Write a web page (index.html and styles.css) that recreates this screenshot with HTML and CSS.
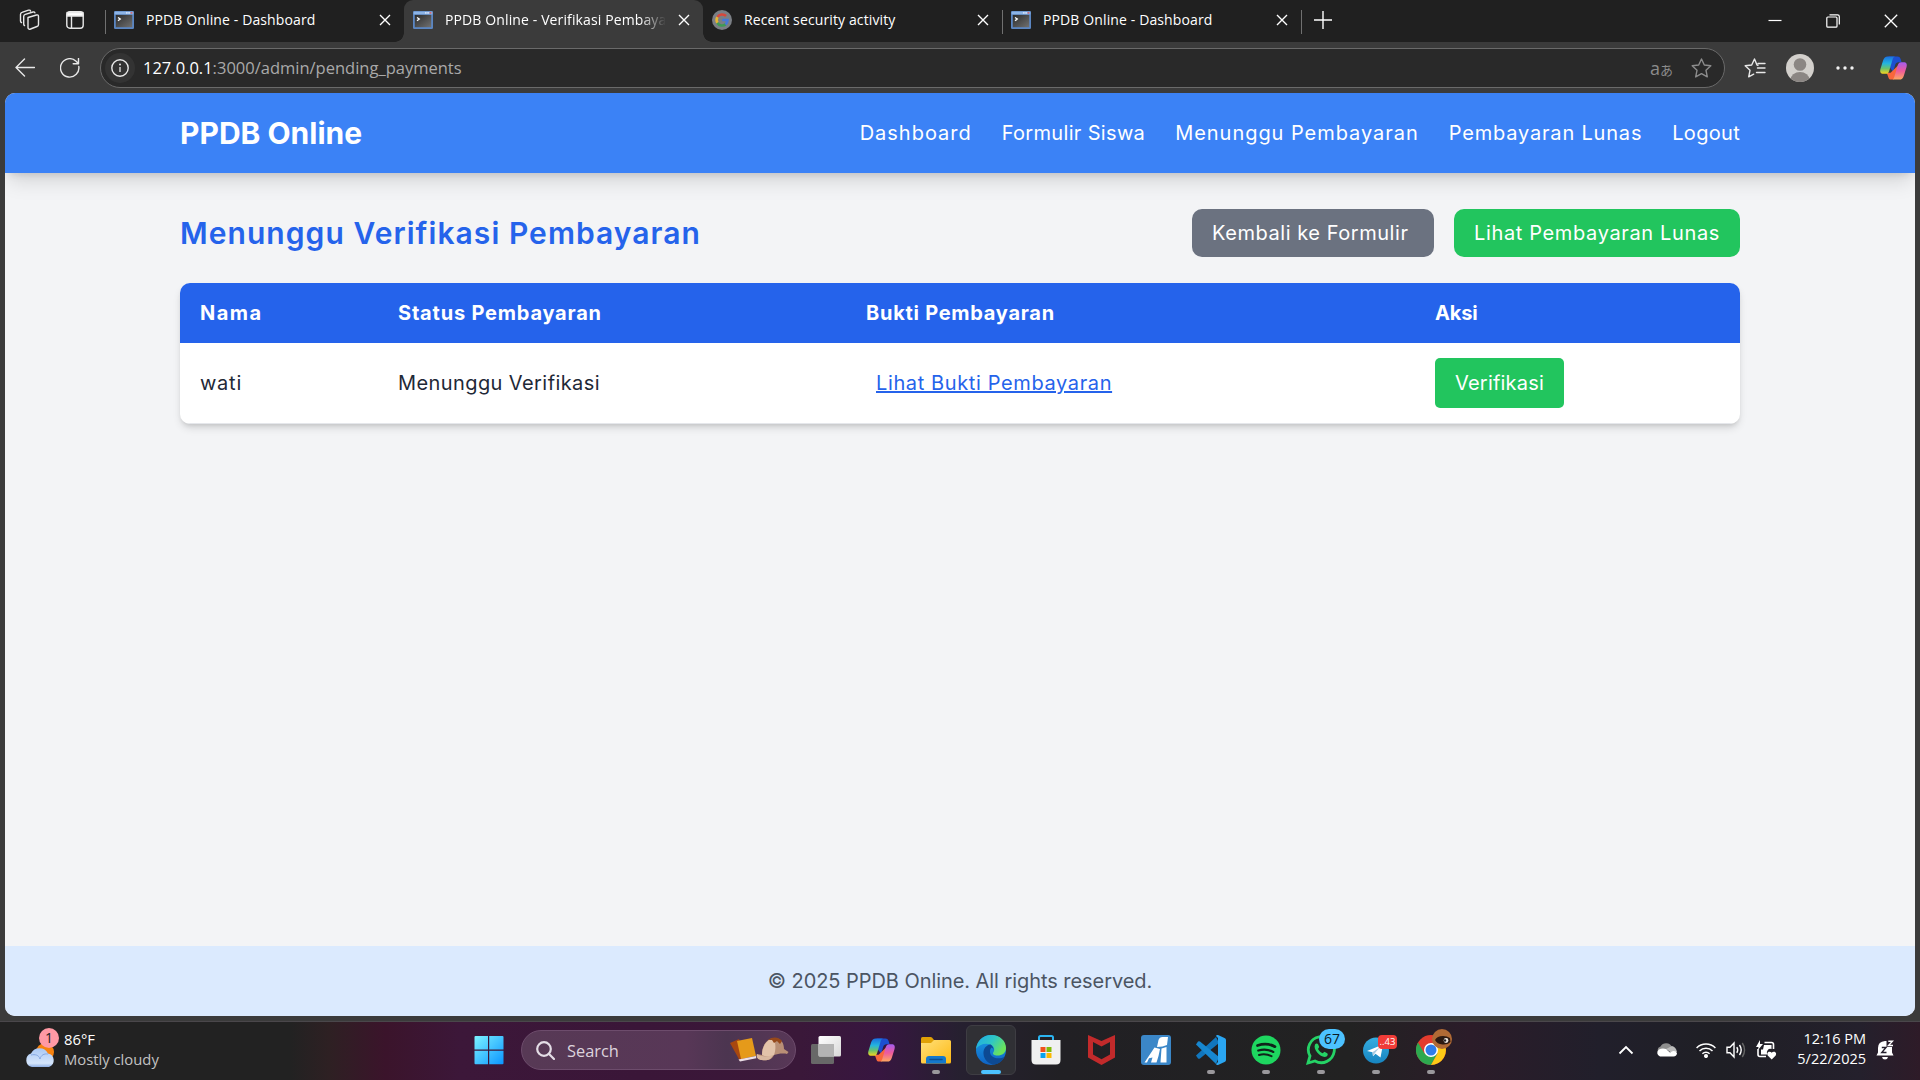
FILE: index.html
```html
<!DOCTYPE html>
<html lang="id">
<head>
<meta charset="utf-8">
<title>PPDB Online - Verifikasi Pembayaran</title>
<link rel="stylesheet" href="styles.css">
</head>
<body>
<svg class="defs" aria-hidden="true">
  <defs>
    <linearGradient id="copA" x1="0" y1="0" x2="0" y2="1"><stop offset="0" stop-color="#1b6fe0"/><stop offset=".4" stop-color="#23b4e0"/><stop offset=".7" stop-color="#6cc36a"/><stop offset="1" stop-color="#f7d51d"/></linearGradient>
    <linearGradient id="copB" x1="0" y1="0" x2="0" y2="1"><stop offset="0" stop-color="#a35cf0"/><stop offset=".5" stop-color="#ee5a9c"/><stop offset="1" stop-color="#ffa860"/></linearGradient>
    <linearGradient id="win" x1="0" y1="0" x2="1" y2="1"><stop offset="0" stop-color="#7cf2ff"/><stop offset="1" stop-color="#0b95ff"/></linearGradient>
    <linearGradient id="term" x1="0" y1="0" x2="1" y2="1"><stop offset="0" stop-color="#2b2b2b"/><stop offset="1" stop-color="#707070"/></linearGradient>
    <linearGradient id="folder" x1="0" y1="0" x2="1" y2="1"><stop offset="0" stop-color="#ffe07a"/><stop offset="1" stop-color="#fdb913"/></linearGradient>
    <linearGradient id="edgeA" x1="0" y1="0" x2="1" y2=".5"><stop offset="0" stop-color="#1fa9e8"/><stop offset=".55" stop-color="#2fc6c5"/><stop offset="1" stop-color="#6be35a"/></linearGradient>
    <linearGradient id="edgeB" x1="0" y1="0" x2="0" y2="1"><stop offset="0" stop-color="#1a9fe6"/><stop offset="1" stop-color="#0f62c4"/></linearGradient>
    <linearGradient id="cloud" x1="0" y1="0" x2="0" y2="1"><stop offset="0" stop-color="#a9c8f5"/><stop offset=".8" stop-color="#d5e5fb"/><stop offset="1" stop-color="#8fb0e6"/></linearGradient>
    <linearGradient id="tele" x1="0" y1="0" x2="0" y2="1"><stop offset="0" stop-color="#35ade1"/><stop offset="1" stop-color="#1784c0"/></linearGradient>
    <linearGradient id="view" x1="0" y1="0" x2="1" y2="1"><stop offset="0" stop-color="#ffffff"/><stop offset="1" stop-color="#d8d8d8"/></linearGradient>
    <symbol id="i-term" viewBox="0 0 20 18"><rect width="20" height="18" rx="1.2" fill="#5b86c2"/><rect x=".6" y=".6" width="18.8" height="2.8" fill="#8db4e6"/><rect x="12" y="1.2" width="1.6" height="1.4" fill="#dfeafa"/><rect x="14.3" y="1.2" width="1.6" height="1.4" fill="#dfeafa"/><rect x="16.6" y="1.2" width="1.8" height="1.4" fill="#e0595b"/><rect x="1.8" y="3.9" width="16.4" height="12.3" fill="url(#term)"/><path d="M4 6.400l2.300 1.700L4 9.800" stroke="#fff" stroke-width="1.3" fill="none"/></symbol>
    <symbol id="i-close" viewBox="0 0 12 12"><path d="M1 1l10 10M11 1L1 11" stroke="#fff" stroke-width="1.4" fill="none"/></symbol>
    <symbol id="i-copilot" viewBox="0 0 30 30"><path d="M10 3h9c2 0 3 1 3.500 3l.8 3h-3c-2 0-3 .8-3.600 3l-2 7-7-9z" fill="#1d4fd0"/><path d="M8 20h4l9-9-4 13c-.7 2-1.500 3-3.500 3h-1c-1.700 0-2.600-1-3-3z" fill="#f8673c"/><path d="M17 3c-1.600 0-2.300 1-2.800 2.700L10.500 18c-.6 2-1.600 3-3.500 3H4.500C1.600 21 .7 19 1.500 16L4.300 7C5.200 4.300 6.500 3 9 3z" fill="url(#copA)"/><path d="M13 27c1.600 0 2.300-1 2.800-2.700L19.500 12c.6-2 1.600-3 3.500-3h2.500c2.900 0 3.800 2 3 5l-2.800 9c-.9 2.700-2.200 4-4.700 4z" fill="url(#copB)"/></symbol>
  </defs>
</svg>

<div class="tabstrip">
  <div class="strip-tools">
    <svg width="22" height="22" viewBox="0 0 22 22" class="line"><path d="M9 8.500l8.500-2.500c1.200-.3 2 .2 2 1.400v8c0 1-.5 1.800-1.500 2.100l-6.500 2.500c-1.500.5-2.500 0-2.500-1.500zM5.500 16.500c-.6-.2-.8-.7-.8-1.500V7.500c0-1 .6-1.800 1.600-2.100L14 3c1-.3 1.600 0 1.900.8M2.500 13.500c-.8-.2-1-.8-1-1.500V5.500c0-1 .5-1.800 1.500-2.100L9.500 1.200c1-.3 1.800 0 2 .8"/></svg>
    <svg width="18" height="18" viewBox="0 0 18 18" class="line"><rect x=".8" y=".8" width="16.400" height="16.400" rx="3"/><path d="M1 1.500h16v3.500H1z" fill="#fff"/><path d="M5.500 5v12"/></svg>
  </div>
  <div class="tab">
    <svg class="fav" width="20" height="18"><use href="#i-term"/></svg><span class="tab-title">PPDB Online - Dashboard</span><svg class="x" width="12" height="12"><use href="#i-close"/></svg>
  </div>
  <div class="tab tab-active">
    <svg class="fav" width="20" height="18"><use href="#i-term"/></svg><span class="tab-title tab-fade">PPDB Online - Verifikasi Pembayaran</span><svg class="x" width="12" height="12"><use href="#i-close"/></svg>
  </div>
  <div class="tab tab-sep">
    <svg class="fav" width="20" height="20" viewBox="0 0 20 20"><circle cx="10" cy="10" r="10" fill="#7b7f85"/><g fill="none" stroke-width="2.600"><path d="M5.500 7A5.600 5.600 0 0 1 14 6" stroke="#d8473b"/><path d="M5.500 13A5.600 5.600 0 0 1 5.400 7.200" stroke="#e7b732"/><path d="M13.600 14.300A5.600 5.600 0 0 1 5.300 12.800" stroke="#3f9b55"/><path d="M10.200 10h5.300a5.600 5.600 0 0 1-2 4.400" stroke="#4678d8"/></g></svg><span class="tab-title">Recent security activity</span><svg class="x" width="12" height="12"><use href="#i-close"/></svg>
  </div>
  <div class="tab tab-sep">
    <svg class="fav" width="20" height="18"><use href="#i-term"/></svg><span class="tab-title">PPDB Online - Dashboard</span><svg class="x" width="12" height="12"><use href="#i-close"/></svg>
  </div>
  <svg class="newtab" width="18" height="18" viewBox="0 0 18 18"><path d="M9 0v18M0 9h18" stroke="#fff" stroke-width="1.400"/></svg>
  <div class="winctl">
    <svg width="14" height="14" viewBox="0 0 14 14"><path d="M.5 6.500h13" stroke="#fff" stroke-width="1.200"/></svg>
    <svg width="14" height="14" viewBox="0 0 14 14" fill="none" stroke="#fff" stroke-width="1.200"><rect x=".8" y="3" width="10.200" height="10.200" rx="1"/><path d="M3.500.8h8c1.200 0 1.800.6 1.800 1.800v8"/></svg>
    <svg width="14" height="14" viewBox="0 0 14 14"><path d="M.8.8l12.400 12.400M13.200.8L.8 13.200" stroke="#fff" stroke-width="1.300"/></svg>
  </div>
</div>

<div class="toolbar">
  <svg class="back" width="20" height="20" viewBox="0 0 20 20"><path d="M19.500 9.500H1.500M9.500 1L1 9.500 9.500 18" class="line"/></svg>
  <svg class="reload" width="20" height="20" viewBox="0 0 20 20"><path d="M18.800 8.500a9.200 9.200 0 1 1-3-5.500l2.600 2.500M18.500.5v5.300h-5.300" class="line"/></svg>
  <div class="address">
    <span class="info"><svg width="18" height="18" viewBox="0 0 18 18"><circle cx="9" cy="9" r="8.200" class="line"/><path d="M9 8v5" stroke="#e8e8e8" stroke-width="1.300"/><circle cx="9" cy="5.500" r="1" fill="#e8e8e8"/></svg></span>
    <span class="url"><b>127.0.0.1</b>:3000/admin/pending_payments</span>
    <span class="translate"><i>a</i>あ</span>
    <svg class="star" width="21" height="20" viewBox="0 0 21 20"><path d="M10.500 1l2.800 6 6.500.8-4.800 4.500 1.300 6.600-5.800-3.200-5.800 3.200L6 12.300 1.200 7.800 7.700 7z"/></svg>
  </div>
  <svg class="favs" width="22" height="20" viewBox="0 0 22 20"><path d="M14 7.200l-1-.2-2.500-6L7.700 7 1.200 7.800 6 12.300l-1.300 6.600 5-2.700M14 5.500h7M13.500 10h7.500M12.500 14.500H21" class="line"/></svg>
  <svg class="avatar" width="28" height="28" viewBox="0 0 28 28"><clipPath id="av"><circle cx="14" cy="14" r="14"/></clipPath><g clip-path="url(#av)"><rect width="28" height="28" fill="#d3d0cc"/><circle cx="14" cy="10.500" r="6.300" fill="#8b8683"/><ellipse cx="14" cy="26" rx="9.500" ry="8" fill="#8b8683"/></g></svg>
  <svg class="dots" width="18" height="4" viewBox="0 0 18 4" fill="#f2f2f2"><circle cx="2" cy="2" r="1.700"/><circle cx="9" cy="2" r="1.700"/><circle cx="16" cy="2" r="1.700"/></svg>
  <svg class="cop" width="29" height="30"><use href="#i-copilot"/></svg>
</div>

<div class="viewport">
  <div class="page">
    <header class="site-header">
      <div class="container header-row">
        <div class="brand">PPDB Online</div>
        <nav class="nav"><a class="nav-dashboard">Dashboard</a><a class="nav-form">Formulir Siswa</a><a class="nav-pending">Menunggu Pembayaran</a><a class="nav-paid">Pembayaran Lunas</a><a class="nav-logout">Logout</a></nav>
      </div>
    </header>
    <main class="container main">
      <div class="title-row">
        <h1>Menunggu Verifikasi Pembayaran</h1>
        <div class="actions"><a class="btn btn-gray">Kembali ke Formulir</a><a class="btn btn-green">Lihat Pembayaran Lunas</a></div>
      </div>
      <div class="table">
        <div class="row head"><span class="h-name">Nama</span><span class="h-status">Status Pembayaran</span><span class="h-proof">Bukti Pembayaran</span><span class="h-action">Aksi</span></div>
        <div class="row body"><span class="c-name">wati</span><span class="c-status">Menunggu Verifikasi</span><span><a class="proof">Lihat Bukti Pembayaran</a></span><span><button class="verify">Verifikasi</button></span></div>
      </div>
    </main>
    <footer class="site-footer">© 2025 PPDB Online. All rights reserved.</footer>
  </div>
</div>

<div class="taskbar">
  <div class="weather">
    <div class="wicon">
      <svg width="31" height="26" viewBox="0 0 31 26"><circle cx="20" cy="11" r="9" fill="#f7820f"/><path d="M7 26a7 7 0 0 1-1-13.500A9.500 9.500 0 0 1 23 12.500 7 7 0 0 1 24 26z" fill="url(#cloud)"/><path d="M6 14c4-1 8 0 9 4 1-4 4-5.500 8-5" fill="none" stroke="#86a8e2"/></svg>
      <span class="wbadge">1</span>
    </div>
    <div class="wtext"><span>86°F</span><span class="dim">Mostly cloudy</span></div>
  </div>
  <div class="dock">
    <span class="cell"><svg width="30" height="30" viewBox="0 0 30 30" fill="url(#win)"><path d="M.5 2q0-1 1-1H14v13.500H.5zM15.200 1h13.300q1 0 1 1v12.500H15.200zM.5 15.700H14v13.500H1.500q-1 0-1-1zM15.200 15.700h14.300v12.500q0 1-1 1H15.200z"/></svg></span>
    <div class="search">
      <svg width="19" height="19" viewBox="0 0 19 19" fill="none" stroke="#e4dde6" stroke-width="2.200"><circle cx="8" cy="8" r="6.800"/><path d="M12.800 12.800L18 18" stroke-linecap="round"/></svg>
      <span>Search</span>
      <svg class="promo" width="60" height="26" viewBox="0 0 60 26"><path d="M1 6l9-4 9 18-8 4z" fill="#a8470f"/><path d="M8 4l15-3 4 18-15 3z" fill="#e59a1a"/><path d="M9.500 22.500L27 19l.3 2.300L11 24.500z" fill="#ece0e8"/><path d="M33 18c0-9 4-16 12-17 8 0 10 6 10 11l4.500 3-1.500 2c-4-1-10 0-13 1-2 5-8 6-12 5-4 0-6-3-5-6 2 0 4 1 5 1z" fill="#b98f76"/><path d="M33 18c0-8 4-15 11-17 3 4 3 12 1 17-4 2-8 2-12 0z" fill="#e3c3aa"/><path d="M28 17c4 3 11 3 16 1-2 5-7 6-11 5-4 0-6-3-5-6z" fill="#d9b8a0"/><path d="M39 3c5-4 11-3 14 1l-2 3-3-3-3 2-2-3z" fill="#96481b"/></svg>
    </div>
    <span class="cell"><svg width="30" height="28" viewBox="0 0 30 28"><rect y="8" width="23" height="20" rx="1.500" fill="#686868"/><rect x="7.500" y="0" width="22.500" height="20.500" rx="1.500" fill="url(#view)"/><path d="M7.500 8H23v12.500H9q-1.500 0-1.500-1.500z" fill="#b4b4b4"/></svg></span>
    <span class="cell"><svg width="29" height="30"><use href="#i-copilot"/></svg></span>
    <span class="cell run"><svg width="30" height="28" viewBox="0 0 30 28"><path d="M0 2.500Q0 1 1.500 1h8q1 0 1.700.8L13 4v5H0z" fill="#e0a106"/><path d="M0 7h10l3-3h15.500Q30 4 30 5.500V26q0 1.500-1.500 1.500h-27Q0 27.500 0 26z" fill="url(#folder)"/><path d="M5 27.500V23q0-3 3-3h14q3 0 3 3v4.500z" fill="#1478cc"/><path d="M9 23.500h12" stroke="#0b4f94" stroke-width="1.500" stroke-linecap="round"/></svg></span>
    <span class="cell run active"><svg width="30" height="30" viewBox="0 0 30 30"><circle cx="15" cy="15" r="15" fill="url(#edgeB)"/><path d="M0 14C1 5.500 7.500 0 15.500 0 24 0 30 6 30 13c0 5-4 7.500-8.500 7.500-3.500 0-5.500-1.500-4-3.500 1.500-2 .8-6-3-7.500C9 7.500 3 9.500 0 14z" fill="url(#edgeA)"/><path d="M14.500 9.500C10 10 7 14 7.500 19c.6 6 5 10 10.500 10.700C23 29 26.500 26 28.500 22c-6 3-15 1-14.500-6 .1-1.500.7-2.700 1.500-3.500 1.800.8 2.500 3 1.500 5 1.500-3-.3-7-2.500-8z" fill="#0d4a94"/></svg></span>
    <span class="cell"><svg width="30" height="30" viewBox="0 0 30 30"><path d="M8 7V2.500Q8 1 9.500 1h11Q22 1 22 2.500V7" fill="none" stroke="#2bb4f0" stroke-width="2"/><path d="M.5 5h29v20q0 4.500-4.500 4.500H5Q.5 29.500.5 25z" fill="#f0f0f0"/><path d="M9.500 12h5v5h-5z" fill="#f1511b"/><path d="M15.500 12h5v5h-5z" fill="#80bb0a"/><path d="M9.500 18h5v5h-5z" fill="#07a3ee"/><path d="M15.500 18h5v5h-5z" fill="#fbb901"/></svg></span>
    <span class="cell"><svg width="27" height="30" viewBox="0 0 27 30"><path d="M0 0l13.500 6L27 0v22.500L13.500 30 0 22.500zM5 7v12.500l8.500 4.700 8.500-4.700V7l-8.500 4.500z" fill="#c22a2b" fill-rule="evenodd"/></svg></span>
    <span class="cell"><svg width="30" height="30" viewBox="0 0 30 30"><rect width="30" height="30" rx="3" fill="#3b87c8"/><path d="M17.500 5q1-3 4-3H27l-1 8q-4 2-10 2zM13.500 12.500l5.500 1.500-1.500 7-2 6.500H10l1.500-5-3.500.8-2 4.200H3.500zM20.500 13.500l5-1.500v15.500h-6z" fill="#fff"/></svg></span>
    <span class="cell run"><svg width="30" height="30" viewBox="0 0 30 30"><path d="M0 20.500L20 2l3 6L4 23.500q-1 .6-2 0z" fill="#1176bd"/><path d="M0 9.500l2-3q1-.6 2 0L23 22l-3 7z" fill="#1787d0"/><path d="M22 0l6.500 3Q30 3.700 30 5v20q0 1.300-1.500 2L22 30q-1.300.3-2-1l2-2V3l-2-2q.7-1.300 2-1z" fill="#2aa6f2"/></svg></span>
    <span class="cell run"><svg width="30" height="30" viewBox="0 0 30 30"><circle cx="15" cy="15" r="14.500" fill="#1ed760"/><g fill="none" stroke="#10231a" stroke-linecap="round"><path d="M6.500 10.500c6-2 12.500-1.500 17.500 1.200" stroke-width="2.700"/><path d="M7.300 15.500c5.200-1.500 10.500-1 15 1.400" stroke-width="2.300"/><path d="M8 20c4.500-1.200 8.500-.8 12.500 1.200" stroke-width="2"/></g></svg></span>
    <span class="cell run"><svg width="30" height="30" viewBox="0 0 30 30"><path d="M2 28l2-7A13 13 0 1 1 9 26z" fill="none" stroke="#25d366" stroke-width="2.800"/><path d="M9 9.500c1-1.500 2.500-1.500 3.200 0l1 2.500-1.200 2c1 2 2.500 3.300 4.700 4.200l1.700-1.500 2.800 1.500c1 .6.600 2.500-.7 3.300C16 24 6.500 15 9 9.500z" fill="#25d366"/></svg><b class="pill wa">67</b></span>
    <span class="cell run"><svg width="30" height="30" viewBox="0 0 30 30"><circle cx="15" cy="15.500" r="13" fill="url(#tele)"/><path d="M6 16L22 9.500l-2.500 13-5-3.700-2.500 2.500-.5-4z" fill="#fff"/><path d="M11.500 17.200L19 12l-5 6-2 3z" fill="#a9cbe2"/></svg><b class="pill tg">..43</b></span>
    <span class="cell run"><svg width="30" height="30" viewBox="0 0 30 30"><circle cx="15" cy="15" r="15" fill="#e33b2e"/><path d="M2 7.500A15 15 0 0 0 15 30l6.500-11.500L15 15 8.500 18.500z" fill="#2da94f"/><path d="M15 30A15 15 0 0 0 28.200 8H15l6.500 10.500z" fill="#fdca16"/><circle cx="15" cy="15" r="7" fill="#fff"/><circle cx="15" cy="15" r="5.500" fill="#2f7de9"/></svg><svg class="pic" width="20" height="20" viewBox="0 0 20 20"><circle cx="10" cy="10" r="10" fill="#b06a35"/><path d="M3 11q2-4 8-4 4 0 7 2l.5 4q-3 3-8 2.500Q5 15 3 11z" fill="#2c1a12"/><circle cx="14" cy="11.500" r="2.400" fill="#e9e4e0"/><circle cx="13" cy="11.500" r="1.200" fill="#222"/></svg></span>
  </div>
  <div class="tray">
    <svg width="16" height="10" viewBox="0 0 16 10"><path d="M1.500 8.500L8 2l6.500 6.500" fill="none" stroke="#fff" stroke-width="1.800"/></svg>
    <svg class="t-cloud" width="21" height="14" viewBox="0 0 21 14"><path d="M4 11a4 4 0 0 1 .5-7.500A6.500 6.500 0 0 1 16 4z" fill="#8e8e8e"/><path d="M10 6l6-3q4 1 5 6l-4 2z" fill="#bbb"/><path d="M4 13.500a3.900 3.900 0 0 1-1-7q3-1.500 7-.5l4 3.500 2.500-1.300q3.500-.5 4.500 2-.2 3-3.500 3.300z" fill="#fff"/></svg>
    <svg class="t-wifi" width="20" height="16" viewBox="0 0 20 16" fill="none" stroke="#fff" stroke-width="1.500"><path d="M.6 6a13.200 13.200 0 0 1 18.800 0M3.500 9a9.200 9.200 0 0 1 13 0M6.400 11.800a5.100 5.100 0 0 1 7.200 0"/><circle cx="10" cy="14" r="1.300" fill="#fff"/></svg>
    <svg class="t-vol" width="20" height="18" viewBox="0 0 20 18" fill="none" stroke="#fff" stroke-width="1.400"><path d="M1 6.200h3L8 2v14l-4-4.200H1z"/><path d="M10.800 6.200q1.800 2.800 0 5.600M13.500 4q3.400 5 0 10"/><path d="M16.300 2q4.500 7 0 14" stroke="#666"/></svg>
    <svg class="t-bat" width="21" height="20" viewBox="0 0 21 20"><path d="M8.500 2.500h7q2 0 2 2V9M2 9v5.500q0 2 2 2h6" fill="none" stroke="#fff" stroke-width="1.600"/><path d="M8 5h7.500v4q-3-1-4 1.500-1 1-.5 4H5V9.500h2z" fill="#fff"/><path d="M4 0L0 7h2.500L2 10l5-6H4z" fill="#fff"/><path d="M15.700 19.500l-4-4q-1.200-2.500 1-3.700 2-.5 3 1 1-1.500 3-1 2.200 1.200 1 3.700z" fill="#fff"/></svg>
    <div class="clock"><span>12:16 PM</span><span>5/22/2025</span></div>
    <svg class="t-bell" width="18" height="20" viewBox="0 0 18 20"><path d="M.5 15.500L2 12.500V8q0-6.500 7-7h1.500v6H16v5.500l1.500 3z" fill="#fff"/><path d="M6 17h6q-.5 2.500-3 2.500T6 17z" fill="#fff"/><path d="M5.800 7.500h4.200l-4.200 5h4.700" fill="none" stroke="#241f2c" stroke-width="1.400"/><path d="M12.300 1.200h4.200l-4 4.300H17" fill="none" stroke="#fff" stroke-width="1.400"/></svg>
  </div>
</div>
</body>
</html>
```

FILE: styles.css
```css
* { box-sizing: border-box; }
body { margin: 0; width: 1920px; height: 1080px; overflow: hidden; display: flex; flex-direction: column; background: #3b3b3b; color: #fff; font-family: "Open Sans", "Noto Sans", sans-serif; }
svg { display: block; flex: none; }
.defs { position: absolute; width: 0; height: 0; }
.line { fill: none; stroke: #e8e8e8; stroke-width: 1.4; stroke-linejoin: round; stroke-linecap: round; }

/* tabs */
.tabstrip { height: 42px; flex: none; display: flex; background: #202020; }
.strip-tools { width: 105px; display: flex; align-items: center; gap: 25px; padding: 0 0 2px 19px; position: relative; }
.strip-tools::after, .tab-sep::after { content: ""; position: absolute; right: -1px; top: 10px; width: 1px; height: 24px; background: #707070; }
.tab { width: 299px; display: flex; align-items: center; padding: 0 13px 2px 9px; position: relative; font-size: 14px; letter-spacing: .12px; }
.tab .fav { margin-right: 12px; width: 20px; }
.tab-title { flex: 1; overflow: hidden; white-space: nowrap; margin-right: 12px; padding-bottom: 2px; }
.tab-fade { -webkit-mask-image: linear-gradient(90deg, #000 88%, transparent); mask-image: linear-gradient(90deg, #000 88%, transparent); }
.tab-active { background: #3b3b3b; border-radius: 9px 9px 0 0; }
.tab-active::before, .tab-active::after { content: ""; position: absolute; bottom: 0; width: 9px; height: 9px; }
.tab-active::before { left: -9px; background: radial-gradient(circle at 0 0, transparent 8.5px, #3b3b3b 9px); }
.tab-active::after { right: -9px; background: radial-gradient(circle at 100% 0, transparent 8.5px, #3b3b3b 9px); }
.newtab { margin: 11px 0 0 13px; }
.winctl { margin-left: auto; display: flex; gap: 44px; padding: 14px 22px 0 0; }

/* toolbar */
.toolbar { height: 51px; flex: none; display: flex; align-items: center; background: #3b3b3b; }
.back { margin-left: 15px; }
.reload { margin-left: 25px; }
.address { width: 1625px; height: 40px; margin-left: 20px; border: 1px solid #6a6a6a; border-radius: 20px; background: #292929; display: flex; align-items: center; padding-left: 4px; }
.info { width: 30px; height: 30px; border-radius: 50%; background: #333; display: flex; align-items: center; justify-content: center; }
.url { margin-left: 8px; font-size: 16.5px; color: #a9a9a9; }
.url b { font-weight: 400; color: #fff; }
.translate { margin-left: auto; color: #8c8c8c; font: 13px "Noto Sans CJK JP", sans-serif; display: flex; align-items: baseline; }
.translate i { font: 18px "Open Sans", sans-serif; }
.star { margin: 0 12px 0 18px; }
.star path { fill: none; stroke: #8c8c8c; stroke-width: 1.4; stroke-linejoin: round; }
.favs { margin-left: 19px; }
.avatar { margin-left: 20px; }
.dots { margin-left: 22px; }
.cop { margin-left: 25px; }

/* page */
.viewport { height: 928px; flex: none; padding: 0 5px 5px; }
.page { height: 923px; display: flex; flex-direction: column; border-radius: 10px; overflow: hidden; background: #f3f4f6; font-family: Inter, sans-serif; font-size: 20px; line-height: 30px; color: #1f2937; }
.container { width: 1560px; margin: 0 auto; }
.site-header { height: 80px; flex: none; background: #3b82f6; color: #fff; box-shadow: 0 12px 19px -4px rgba(0,0,0,.13), 0 5px 8px -4px rgba(0,0,0,.13); }
.header-row { height: 80px; display: flex; align-items: center; justify-content: space-between; }
.brand { font-size: 30px; font-weight: 700; padding-bottom: 1px; }
.nav { display: flex; gap: 30px; }
.nav-dashboard { letter-spacing: .98px; }
.nav-form { letter-spacing: .33px; }
.nav-pending { letter-spacing: .96px; }
.nav-paid { letter-spacing: .81px; }
.nav-logout { letter-spacing: .3px; }
.main { flex: 1; padding-top: 36px; }
.title-row { display: flex; justify-content: space-between; align-items: center; height: 48px; }
h1 { margin: 0; padding-bottom: 1px; font-size: 30px; font-weight: 600; letter-spacing: 1.06px; color: #2563eb; }
.actions { display: flex; gap: 20px; }
.btn { height: 48px; padding: 9px 20px; border-radius: 10px; color: #fff; white-space: nowrap; }
.btn-gray { background: #6b7280; width: 242px; letter-spacing: .55px; }
.btn-green { background: #22c55e; width: 286px; letter-spacing: .64px; }
.table { margin-top: 26px; border-radius: 10px; overflow: hidden; background: #fff; box-shadow: 0 5px 8px -1px rgba(0,0,0,.12), 0 3px 5px -2px rgba(0,0,0,.12); }
.row { display: grid; grid-template-columns: 198px 468px 569px 325px; align-items: center; }
.row > span { padding-left: 20px; }
.head { height: 60px; background: #2563eb; color: #fff; font-weight: 700; }
.h-name { letter-spacing: 1.5px; }
.h-status { letter-spacing: .8px; }
.h-proof { letter-spacing: .73px; }
.h-action { letter-spacing: -.15px; }
.body { height: 81px; border-bottom: 1px solid #e5e7eb; }
.c-name { letter-spacing: .75px; }
.c-status { letter-spacing: .41px; }
.proof { margin-left: 10px; color: #2563eb; text-decoration: underline; letter-spacing: .62px; }
.verify { width: 129px; height: 50px; border: 0; border-radius: 5px; background: #22c55e; color: #fff; font: inherit; padding: 0; letter-spacing: .2px; }
.site-footer { height: 70px; flex: none; background: #dbeafe; color: #4b5563; display: flex; align-items: center; justify-content: center; letter-spacing: -.06px; }

/* taskbar */
.taskbar { height: 59px; flex: none; border-top: 1px solid #4a474b; padding-bottom: 2px; display: flex; align-items: center; background: linear-gradient(90deg, #222 0, #222 290px, #2e2023 330px, #3b142b 385px, #3c1739 460px, #3a1638 640px, #3a1839 800px, #371640 880px, #262030 960px, #212024 1060px, #222 1350px, #2b1c29 1470px, #211f2b 1600px, #1f1f25 1720px, #24202c 1860px, #2e1b28 1920px); }
.weather { width: 464px; display: flex; padding-left: 25px; gap: 8px; align-items: center; }
.wicon { position: relative; width: 31px; height: 40px; padding-top: 11px; }
.wbadge { position: absolute; left: 14px; top: -2px; width: 20px; height: 20px; border-radius: 50%; background: #ff99a4; color: #222; font-size: 14px; line-height: 20px; text-align: center; }
.wtext, .clock { display: flex; flex-direction: column; font-size: 14.8px; line-height: 20px; padding-bottom: 2px; }
.dim { color: #c2c2c2; }
.dock { display: flex; align-items: center; gap: 5px; }
.cell { width: 50px; height: 50px; display: flex; align-items: center; justify-content: center; position: relative; border-radius: 6px; }
.active { background: #303035; border: 1px solid #3e3d43; }
.run::after { content: ""; position: absolute; bottom: 1px; left: 21px; width: 8px; height: 4px; border-radius: 2px; background: #9a989c; }
.active::after { left: 14px; width: 20px; bottom: 0; background: #4cc2ff; }
.search { width: 275px; height: 40px; margin: 0 0 0 2px; border: 1px solid #6d4c6c; border-radius: 20px; background: linear-gradient(90deg, #573955, #583757 60%, #4c3550 75%, #583757); display: flex; align-items: center; padding: 0 6px 0 14px; gap: 12px; font-size: 16.4px; color: #ddd3dd; }
.promo { margin-left: auto; }
.pill { position: absolute; font-weight: 400; color: #0b1a24; }
.wa { left: 23px; top: 4px; width: 26px; height: 20px; border-radius: 10px; background: #4cc2ff; font-size: 14px; line-height: 20px; text-align: center; }
.tg { left: 27px; top: 10px; width: 19px; height: 14px; border-radius: 4px; background: #f03c38; color: #fff; font-size: 9.5px; line-height: 14px; text-align: center; }
.pic { position: absolute; left: 26px; top: 4px; }
.tray { margin-left: auto; display: flex; align-items: center; padding-right: 26px; }
.t-cloud { margin-left: 22px; }
.t-wifi { margin-left: 19px; }
.t-vol { margin-left: 10px; }
.t-bat { margin-left: 10px; }
.clock { width: 89px; align-items: flex-end; font-size: 14.5px; }
.t-bell { margin-left: 10px; }
```
